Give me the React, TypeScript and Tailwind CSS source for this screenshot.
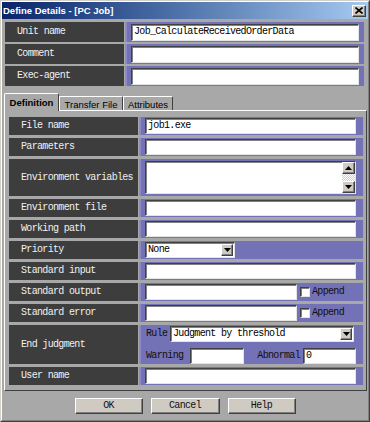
import React from "react";

const MONO = "font-['Liberation_Mono',monospace] text-[10px] tracking-[-0.67px] leading-none";
const SUNKEN = "bg-white border border-t-[#404040] border-l-[#404040] border-r-[#e4e4e4] border-b-[#e4e4e4] shadow-[inset_1px_1px_0_#808080]";
const RAISED = "bg-[#cfcbc3] border border-t-white border-l-white border-r-[#404040] border-b-[#404040] shadow-[inset_-1px_-1px_0_#808080]";

function DownArrow() {
  return (
    <svg width="7" height="4" viewBox="0 0 7 4">
      <path d="M0 0h7L3.5 4z" fill="#000" />
    </svg>
  );
}
function UpArrow() {
  return (
    <svg width="7" height="4" viewBox="0 0 7 4">
      <path d="M0 4h7L3.5 0z" fill="#000" />
    </svg>
  );
}

function Label({ children }: { children: React.ReactNode }) {
  return (
    <div className={`h-full bg-[#3d3d3d] text-[#f0f0f0] flex items-center pl-[12px] ${MONO}`}>{children}</div>
  );
}

function TextBox({ value = "", className = "" }: { value?: string; className?: string }) {
  return (
    <div className={`${SUNKEN} h-[16px] flex items-center pl-[2px] text-black overflow-hidden whitespace-nowrap ${MONO} ${className}`}>
      {value}
    </div>
  );
}

function Select({ value, className = "" }: { value: string; className?: string }) {
  return (
    <div className={`${SUNKEN} h-[16px] flex items-center justify-between pl-[2px] pr-[1px] text-black whitespace-nowrap ${MONO} ${className}`}>
      <span>{value}</span>
      <div className={`${RAISED} w-[12px] h-[12px] flex items-center justify-center`}>
        <DownArrow />
      </div>
    </div>
  );
}

function CheckAppend() {
  return (
    <div className="flex items-center">
      <div className={`${SUNKEN} w-[10px] h-[10px] ml-[3px]`} />
      <span className={`ml-[2px] text-[#101010] ${MONO}`}>Append</span>
    </div>
  );
}

function PRow({ label, h = "h-[18px]", children }: { label: string; h?: string; children: React.ReactNode }) {
  return (
    <div className={`flex ${h}`}>
      <div className="w-[129px]">
        <Label>{label}</Label>
      </div>
      <div className="flex-1 ml-[1px] bg-[#7472b6] border-l-[2px] border-l-[#8c8acb] pl-[4px] pr-[7px] flex items-center">
        {children}
      </div>
    </div>
  );
}

export default function App() {
  return (
    <div className="w-[370px] h-[422px] bg-[#a8a8a8] border border-t-[#d4d0c8] border-l-[#d4d0c8] border-r-[#404040] border-b-[#404040]">
      <div className="h-full border border-t-white border-l-white border-r-[#808080] border-b-[#808080] flex flex-col">
        {/* Title bar */}
        <div className="h-[17px] shrink-0 bg-gradient-to-r from-[#0a246a] to-[#a6caf0] flex items-center justify-between pl-[1px] pr-[2px]">
          <span className="font-['Liberation_Sans',sans-serif] font-bold text-[9.5px] text-white leading-none">
            Define Details - [PC Job]
          </span>
          <div className={`${RAISED} w-[14px] h-[12px] flex items-center justify-center`}>
            <svg width="8" height="7" viewBox="0 0 8 7">
              <path d="M0.5 0.5L7.5 6.5M7.5 0.5L0.5 6.5" stroke="#000" strokeWidth="1.6" />
            </svg>
          </div>
        </div>

        {/* Top rows */}
        <div className="pt-[3px] pl-[3px] pr-[4px] flex flex-col gap-[2px]">
          {[
            ["Unit name", "Job_CalculateReceivedOrderData"],
            ["Comment", ""],
            ["Exec-agent", ""],
          ].map(([l, v]) => (
            <div key={l} className="flex h-[20px]">
              <div className="w-[119px]">
                <Label>{l}</Label>
              </div>
              <div className="flex-1 ml-[1px] bg-[#7472b6] border-l-[2px] border-l-[#8c8acb] pl-[4px] pr-[5px] flex items-center">
                <TextBox value={v} className="flex-1 h-[17px]" />
              </div>
            </div>
          ))}
        </div>

        {/* Tabs */}
        <div className="mt-[7px] h-[18px] ml-[2px] flex items-end relative z-10 -mb-[1px] font-['Liberation_Sans',sans-serif] text-[9.5px] text-black leading-none">
          <div className="w-[55px] h-[18px] bg-[#a8a8a8] border-t border-l border-t-white border-l-white border-r border-r-[#404040] rounded-tl-[2px] rounded-tr-[2px] flex items-start justify-center pt-[4px] font-bold">
            Definition
          </div>
          <div className="w-[64px] h-[14px] mb-[1px] border-t border-l border-t-white border-l-white border-r border-r-[#404040] rounded-tr-[2px] flex items-start justify-center pt-[3px]">
            Transfer File
          </div>
          <div className="w-[50px] h-[14px] mb-[1px] border-t border-l border-t-white border-l-white border-r border-r-[#404040] rounded-tr-[2px] flex items-start justify-center pt-[3px]">
            Attributes
          </div>
        </div>

        {/* Panel */}
        <div className="ml-[2px] mr-[1px] h-[281px] shrink-0 border border-t-white border-l-white border-r-[#404040] border-b-[#404040] pt-[6px] pl-[4px] pr-[3px] flex flex-col gap-[3px]">
          <PRow label="File name">
            <TextBox value="job1.exe" className="flex-1" />
          </PRow>
          <PRow label="Parameters">
            <TextBox className="flex-1" />
          </PRow>
          <PRow label="Environment variables" h="h-[37px]">
            <div className={`${SUNKEN} flex-1 h-[33px] flex`}>
              <div className="flex-1" />
              <div className="w-[13px] flex flex-col">
                <div className={`${RAISED} h-[12px] flex items-center justify-center`}>
                  <UpArrow />
                </div>
                <div className="flex-1 bg-[repeating-conic-gradient(#d4d0c8_0%_25%,#ffffff_0%_50%)] bg-[length:2px_2px]" />
                <div className={`${RAISED} h-[12px] flex items-center justify-center`}>
                  <DownArrow />
                </div>
              </div>
            </div>
          </PRow>
          <PRow label="Environment file">
            <TextBox className="flex-1" />
          </PRow>
          <PRow label="Working path">
            <TextBox className="flex-1" />
          </PRow>
          <PRow label="Priority">
            <Select value="None" className="w-[90px]" />
          </PRow>
          <PRow label="Standard input">
            <TextBox className="flex-1" />
          </PRow>
          <PRow label="Standard output">
            <TextBox className="w-[152px]" />
            <CheckAppend />
          </PRow>
          <PRow label="Standard error">
            <TextBox className="w-[152px]" />
            <CheckAppend />
          </PRow>
          <PRow label="End judgment" h="h-[39px]">
            <div className="flex-1 flex flex-col gap-[6px]">
              <div className="flex items-center">
                <span className={`w-[25px] pl-[1px] text-[#101010] ${MONO}`}>Rule</span>
                <Select value="Judgment by threshold" className="flex-1 mr-[2px]" />
              </div>
              <div className="flex items-center">
                <span className={`w-[45px] pl-[1px] text-[#101010] ${MONO}`}>Warning</span>
                <TextBox className="w-[54px] h-[15px]" />
                <div className="flex-1" />
                <span className={`text-[#101010] ${MONO}`}>Abnormal</span>
                <TextBox value="0" className="w-[53px] h-[15px] ml-[3px]" />
              </div>
            </div>
          </PRow>
          <PRow label="User name">
            <TextBox className="flex-1" />
          </PRow>
        </div>

        {/* Buttons */}
        <div className="mt-[7px] flex justify-center gap-[8px]">
          {[
            ["OK", "w-[68px]"],
            ["Cancel", "w-[69px]"],
            ["Help", "w-[68px]"],
          ].map(([t, w]) => (
            <div key={t} className={`${RAISED} ${w} h-[16px] flex items-center justify-center text-[#101010] ${MONO}`}>
              {t}
            </div>
          ))}
        </div>
      </div>
    </div>
  );
}
